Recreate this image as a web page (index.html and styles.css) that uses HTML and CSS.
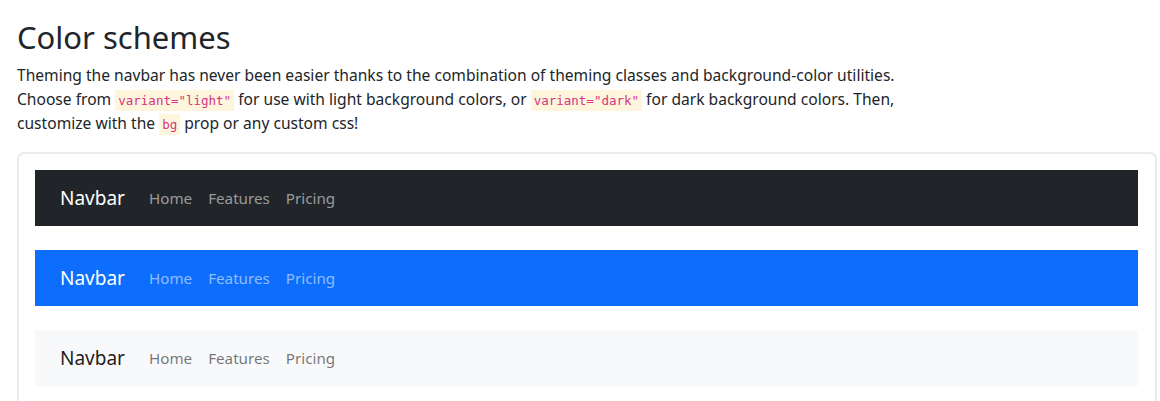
FILE: index.html
```html
<!DOCTYPE html>
<html lang="en">
<head>
<meta charset="utf-8">
<link rel="stylesheet" href="styles.css">
</head>
<body>
<main class="page">
  <h2 class="title">Color schemes</h2>
  <p class="lead">Theming the navbar has never been easier thanks to the combination of theming classes and background-color utilities.<br>Choose from <code>variant="light"</code> for use with light background colors, or <code>variant="dark"</code> for dark background colors. Then,<br>customize with the <code>bg</code> prop or any custom css!</p>
  <div class="example">
    <nav class="navbar navbar-dark">
      <span class="brand">Navbar</span>
      <a class="link">Home</a><a class="link">Features</a><a class="link">Pricing</a>
    </nav>
    <nav class="navbar navbar-primary">
      <span class="brand">Navbar</span>
      <a class="link">Home</a><a class="link">Features</a><a class="link">Pricing</a>
    </nav>
    <nav class="navbar navbar-light">
      <span class="brand">Navbar</span>
      <a class="link">Home</a><a class="link">Features</a><a class="link">Pricing</a>
    </nav>
  </div>
</main>
</body>
</html>
```

FILE: styles.css
```css
* { box-sizing: border-box; }
html, body { margin: 0; padding: 0; background: #fff; }
body {
  font-family: "Noto Sans", "Noto Sans CJK KR", sans-serif;
  color: #212529;
  font-size: 15.6px;
  line-height: 24px;
}
.page { padding: 17px 3px 0 17px; }
.title {
  margin: 0 0 6px;
  font-size: 31px;
  font-weight: 400;
  line-height: 40px;
}
.lead { margin: 0 0 17px; }
code {
  font-family: "DejaVu Sans Mono", monospace;
  font-size: 12.5px;
  line-height: 1;
  color: #d63384;
  background: #fdf6dc;
  padding: 3px 3px;
}
.example {
  border: 2px solid #e9ecef;
  border-radius: 7px 7px 0 0;
  border-bottom: none;
  padding: 16px 17px 16px 16px;
  display: flex;
  flex-direction: column;
  gap: 24px;
}
.navbar {
  height: 56px;
  display: flex;
  align-items: center;
  padding: 0 25px;
}
.brand {
  font-size: 19px;
  margin-right: 16px;
}
.link {
  padding: 0 8px;
  font-size: 15.2px;
}
.navbar-dark { background: #212529; }
.navbar-dark .brand { color: #fff; }
.navbar-dark .link { color: rgba(255,255,255,.55); }
.navbar-primary { background: #0d6efd; }
.navbar-primary .brand { color: #fff; }
.navbar-primary .link { color: rgba(255,255,255,.55); }
.navbar-light { background: #f8f9fa; }
.navbar-light .brand { color: rgba(0,0,0,.9); }
.navbar-light .link { color: rgba(0,0,0,.55); }
```
